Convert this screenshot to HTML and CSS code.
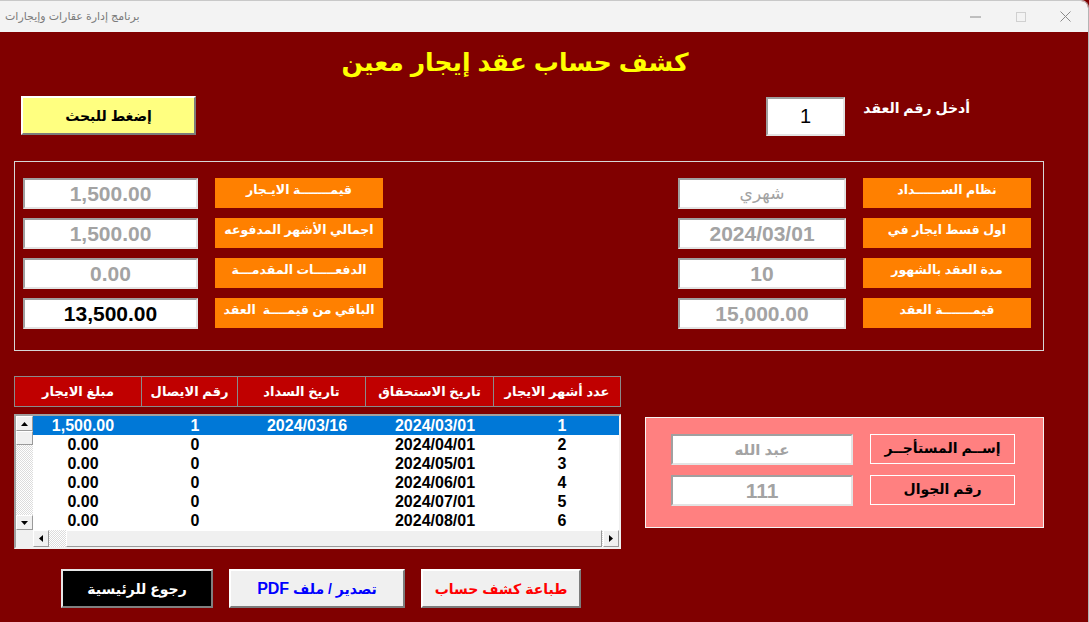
FILE: index.html
```html
<!DOCTYPE html>
<html lang="ar" dir="rtl">
<head>
<meta charset="utf-8">
<title>كشف حساب عقد إيجار معين</title>
<link rel="stylesheet" href="styles.css">
</head>
<body>
<div class="window">
  <header class="titlebar">
    <div class="win-controls">
      <span class="ctl"><svg width="11" height="11" viewBox="0 0 11 11"><path d="M0.5 0.5 L10.5 10.5 M10.5 0.5 L0.5 10.5" stroke="#8a8a8a" stroke-width="1" fill="none"/></svg></span>
      <span class="ctl"><svg width="10" height="10" viewBox="0 0 10 10"><rect x="0.5" y="0.5" width="9" height="9" fill="none" stroke="#d0d0d0" stroke-width="1"/></svg></span>
      <span class="ctl"><svg width="11" height="2" viewBox="0 0 11 2"><path d="M0 1 H11" stroke="#8a8a8a" stroke-width="1"/></svg></span>
    </div>
    <div class="win-title">برنامج إدارة عقارات وإيجارات</div>
  </header>

  <main class="form">
    <h1 class="heading">كشف حساب عقد إيجار معين</h1>

    <section class="search-row">
      <div class="contract-entry">
        <span class="entry-label">أدخل رقم العقد</span>
        <span class="field field-entry">1</span>
      </div>
      <button class="btn btn-search" type="button">إضغط للبحث</button>
    </section>

    <section class="summary">
      <div class="pair-col pair-col-right">
        <span class="tag">نظام الســــــداد</span>
        <span class="field field-grey field-light">شهري</span>
        <span class="tag">اول قسط ايجار في</span>
        <span class="field field-grey">2024/03/01</span>
        <span class="tag">مدة العقد بالشهور</span>
        <span class="field field-grey">10</span>
        <span class="tag">قيمـــــــة العقد</span>
        <span class="field field-grey">15,000.00</span>
      </div>
      <div class="pair-col pair-col-left">
        <span class="tag">قيمـــــــة الايـجار</span>
        <span class="field field-grey">1,500.00</span>
        <span class="tag">اجمالي الأشهر المدفوعه</span>
        <span class="field field-grey">1,500.00</span>
        <span class="tag">الدفعـــــات المقدمـــة</span>
        <span class="field field-grey">0.00</span>
        <span class="tag">الباقي من قيمــــة&nbsp; العقد</span>
        <span class="field field-dark">13,500.00</span>
      </div>
    </section>

    <section class="lower">
      <div class="tenant">
        <span class="tenant-tag">إســم المستأجــر</span>
        <span class="field field-grey field-name">عبد الله</span>
        <span class="tenant-tag">رقم الجوال</span>
        <span class="field field-grey">111</span>
      </div>

      <div class="ledger">
        <div class="ledger-head">
          <span>عدد أشهر الايجار</span>
          <span>تاريخ الاستحقاق</span>
          <span>تاريخ السداد</span>
          <span>رقم الايصال</span>
          <span>مبلغ الايجار</span>
        </div>
        <div class="listbox">
          <div class="rows">
            <div class="row selected"><span>1</span><span>2024/03/01</span><span>2024/03/16</span><span>1</span><span>1,500.00</span></div>
            <div class="row"><span>2</span><span>2024/04/01</span><span></span><span>0</span><span>0.00</span></div>
            <div class="row"><span>3</span><span>2024/05/01</span><span></span><span>0</span><span>0.00</span></div>
            <div class="row"><span>4</span><span>2024/06/01</span><span></span><span>0</span><span>0.00</span></div>
            <div class="row"><span>5</span><span>2024/07/01</span><span></span><span>0</span><span>0.00</span></div>
            <div class="row"><span>6</span><span>2024/08/01</span><span></span><span>0</span><span>0.00</span></div>
          </div>
          <div class="vscroll">
            <span class="sb-btn sb-v"><svg width="7" height="4" viewBox="0 0 7 4"><path d="M3.5 0 L7 4 L0 4 Z" fill="#000"/></svg></span>
            <span class="sb-thumb-v"></span>
            <span class="sb-track"></span>
            <span class="sb-btn sb-v"><svg width="7" height="4" viewBox="0 0 7 4"><path d="M0 0 L7 0 L3.5 4 Z" fill="#000"/></svg></span>
          </div>
          <div class="hscroll">
            <span class="sb-btn sb-h"><svg width="4" height="7" viewBox="0 0 4 7"><path d="M0 3.5 L4 0 L4 7 Z" fill="#000"/></svg></span>
            <span class="sb-gap"></span>
            <span class="sb-thumb-h"></span>
            <span class="sb-btn sb-h"><svg width="4" height="7" viewBox="0 0 4 7"><path d="M0 0 L4 3.5 L0 7 Z" fill="#000"/></svg></span>
          </div>
          <div class="corner"></div>
        </div>
      </div>
    </section>

    <section class="actions">
      <button class="btn btn-print" type="button">طباعة كشف حساب</button>
      <button class="btn btn-export" type="button">تصدير / ملف <span class="latin">PDF</span></button>
      <button class="btn btn-home" type="button">رجوع للرئيسية</button>
    </section>
  </main>
</div>
</body>
</html>
```

FILE: styles.css
```css
* {
  box-sizing: border-box;
  margin: 0;
  padding: 0;
}

html,
body {
  width: 1089px;
  height: 622px;
  overflow: hidden;
}

body {
  font-family: "Liberation Sans", "DejaVu Sans", sans-serif;
  background: #800000;
}

.window {
  width: 1089px;
  height: 622px;
  display: flex;
  flex-direction: column;
  border-top: 1px solid #c8c8c8;
  border-right: 1px solid #b4b4b4;
  border-top-right-radius: 8px;
  overflow: hidden;
  background: #800000;
}

/* title bar */
.titlebar {
  height: 31px;
  flex: none;
  background: #f3f3f3;
  display: flex;
  justify-content: space-between;
}

.win-controls {
  display: flex;
}

.ctl {
  width: 45px;
  display: flex;
  align-items: center;
  justify-content: center;
}

.win-title {
  padding-left: 5px;
  font-size: 11px;
  line-height: 31px;
  color: #7a7a7a;
}

/* form */
.form {
  flex: 1;
  padding-top: 12px;
}

.heading {
  height: 36px;
  line-height: 36px;
  padding-right: 58px;
  text-align: center;
  color: #ffff00;
  font-size: 25px;
  font-weight: bold;
}

.search-row {
  margin-top: 16px;
  height: 40px;
  display: flex;
  justify-content: space-between;
  align-items: flex-start;
  padding-right: 118px;
  padding-left: 21px;
}

.contract-entry {
  display: flex;
  gap: 10px;
  padding-top: 1px;
}

.entry-label {
  width: 115px;
  padding-top: 3px;
  color: #fff;
  font-size: 14px;
  font-weight: bold;
  text-align: right;
}

.field {
  background: #fff;
  border-style: solid;
  border-width: 2px;
  border-color: #a0a0a0 #e3e3e3 #e3e3e3 #a0a0a0;
  display: flex;
  align-items: center;
  justify-content: center;
  font-size: 21px;
  font-weight: bold;
  white-space: nowrap;
}

.field-entry {
  width: 79px;
  height: 39px;
  font-weight: normal;
  font-size: 20px;
  color: #000;
}

.field-grey {
  color: #a3a3a3;
}

.field-light {
  font-weight: normal;
  font-size: 17px;
}

.field-name {
  font-size: 15px;
}

.field-dark {
  color: #000;
}

.btn {
  font-family: "Liberation Sans", "DejaVu Sans", sans-serif;
  font-weight: bold;
  font-size: 14px;
  background: #f0f0f0;
  border-style: solid;
  border-width: 2px;
  border-color: #ffffff #7c7c7c #7c7c7c #ffffff;
  height: 39px;
  white-space: nowrap;
}

.btn .latin {
  font-size: 16px;
}

.btn-search {
  width: 175px;
  background: #ffff80;
  color: #000;
  font-size: 14px;
}

/* summary group */
.summary {
  margin-top: 25px;
  margin-right: 44px;
  width: 1030px;
  height: 190px;
  border: 1px solid #d6d6d6;
  padding: 16px 12px 0 8px;
  display: flex;
  justify-content: space-between;
  align-items: flex-start;
}

.pair-col {
  display: grid;
  grid-auto-rows: 31px;
  row-gap: 9px;
  column-gap: 17px;
}

.pair-col-right {
  grid-template-columns: 168px 168px;
}

.pair-col-left {
  grid-template-columns: 168px 175px;
}

.tag {
  background: #ff8000;
  color: #fff;
  font-size: 12.5px;
  font-weight: bold;
  text-align: center;
  line-height: 24px;
  height: 30px;
  white-space: nowrap;
  overflow: hidden;
}

/* lower section */
.lower {
  margin-top: 25px;
  margin-right: 44px;
  display: flex;
  gap: 24px;
  align-items: flex-start;
}

.tenant {
  width: 399px;
  height: 111px;
  margin-top: 41px;
  background: #ff8080;
  border: 1px solid #f4f4f4;
  padding: 16px 28px 0 25px;
  display: grid;
  grid-template-columns: 145px 182px;
  grid-auto-rows: 31px;
  column-gap: 17px;
  row-gap: 10px;
  align-content: start;
}

.tenant-tag {
  border: 1px solid #fff;
  height: 30px;
  color: #000;
  font-size: 14px;
  font-weight: bold;
  line-height: 26px;
  text-align: center;
  white-space: nowrap;
}

.ledger {
  width: 607px;
}

.ledger-head {
  display: grid;
  grid-template-columns: 127px 128px 128px 96px 1fr;
  height: 31px;
  border: 1px solid #8a8a8a;
  background: #c00000;
}

.ledger-head span {
  border-left: 1px solid #8a8a8a;
  color: #fff;
  font-size: 13px;
  font-weight: bold;
  display: flex;
  align-items: center;
  justify-content: center;
  white-space: nowrap;
}

.ledger-head span:last-child {
  border-left: 0;
}

.listbox {
  margin-top: 7px;
  height: 135px;
  border-style: solid;
  border-width: 2px;
  border-color: #a0a0a0 #f0f0f0 #f0f0f0 #a0a0a0;
  background: #fff;
  display: grid;
  grid-template-columns: 1fr 17px;
  grid-template-rows: 114px 17px;
}

.rows {
  overflow: hidden;
}

.row {
  display: grid;
  grid-template-columns: 114px 140px 116px 108px 1fr;
  height: 19px;
  line-height: 19px;
  font-size: 16px;
  font-weight: bold;
  color: #000;
}

.row span {
  text-align: center;
}

.row span:last-child {
  padding-right: 8px;
}

.row.selected {
  background: #0078d7;
  color: #fff;
}

.vscroll {
  display: flex;
  flex-direction: column;
  background: repeating-conic-gradient(#ffffff 0 25%, #dcdcdc 0 50%) 0 0 / 2px 2px;
}

.sb-btn {
  background: #f0f0f0;
  border: 1px solid;
  border-color: #ffffff #9a9a9a #9a9a9a #ffffff;
  display: flex;
  align-items: center;
  justify-content: center;
  flex: none;
}

.sb-v {
  height: 15px;
}

.sb-thumb-v {
  height: 14px;
  flex: none;
  background: #f0f0f0;
  border: 1px solid;
  border-color: #ffffff #9a9a9a #9a9a9a #ffffff;
}

.sb-track {
  flex: 1;
}

.hscroll {
  direction: ltr;
  display: flex;
  background: repeating-conic-gradient(#ffffff 0 25%, #dcdcdc 0 50%) 0 0 / 2px 2px;
}

.sb-h {
  width: 16px;
}

.sb-gap {
  width: 17px;
  flex: none;
}

.sb-thumb-h {
  flex: 1;
  margin-right: 1px;
  background: #f0f0f0;
  border: 1px solid;
  border-color: #ffffff #9a9a9a #9a9a9a #ffffff;
}

.corner {
  background: #f0f0f0;
}

/* action buttons */
.actions {
  margin-top: 20px;
  margin-right: 507px;
  display: flex;
  gap: 16px;
}

.btn-print {
  width: 160px;
  color: #ff0000;
}

.btn-export {
  width: 176px;
  color: #0000ff;
}

.btn-home {
  width: 152px;
  background: #000;
  color: #fff;
  border-color: #e6e6e6 #808080 #808080 #e6e6e6;
}
```
